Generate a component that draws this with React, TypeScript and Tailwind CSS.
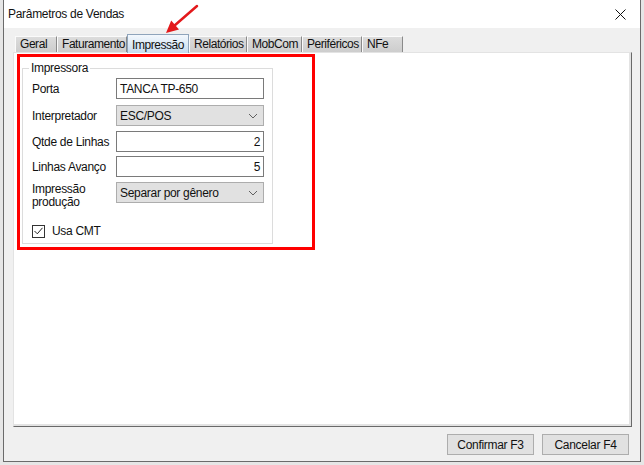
import React from "react";

const tabs = [
  { label: "Geral", w: "w-[42px]" },
  { label: "Faturamento", w: "w-[70px]" },
  { label: "Impressão", w: "w-[62px]", active: true },
  { label: "Relatórios", w: "w-[58px]" },
  { label: "MobCom", w: "w-[55px]" },
  { label: "Periféricos", w: "w-[60px]" },
  { label: "NFe", w: "w-[41px]" },
];

const Chevron = () => (
  <svg width="10" height="6" viewBox="0 0 10 6" className="shrink-0">
    <path d="M1 1 L5 5 L9 1" fill="none" stroke="#606060" strokeWidth="1" />
  </svg>
);

const TextBox = ({ value, right }: { value: string; right?: boolean }) => (
  <div
    className={`w-[148px] h-[21px] border border-[#7a7a7a] bg-white flex items-center px-[3px] ${
      right ? "justify-end" : ""
    }`}
  >
    {value}
  </div>
);

const Combo = ({ value }: { value: string }) => (
  <div className="w-[148px] h-[21px] border border-[#adadad] bg-[#e1e1e1] flex items-center justify-between pl-[3px] pr-[5px]">
    <span>{value}</span>
    <Chevron />
  </div>
);

export default function App() {
  return (
    <div className="relative w-[644px] h-[465px] bg-[#e6e6e6] text-[12px] tracking-[-0.3px] text-[#111] font-['Liberation_Sans',Arial,sans-serif]">
      {/* window */}
      <div className="ml-[3px] w-[638px] h-[462px] border-x border-b border-[#6b6b6b] bg-[#f0f0f0] flex flex-col">
        {/* title bar */}
        <div className="h-[28px] bg-white flex items-center justify-between pl-[4px] pr-[14px] shrink-0">
          <span>Parâmetros de Vendas</span>
          <svg width="11" height="11" viewBox="0 0 11 11">
            <path d="M0.5 0.5 L10.5 10.5 M10.5 0.5 L0.5 10.5" stroke="#111" strokeWidth="1" />
          </svg>
        </div>

        {/* tabs */}
        <div className="mt-[5px] ml-[11px] h-[19px] flex items-end shrink-0 tracking-[-0.45px]">
          {tabs.map((t) =>
            t.active ? (
              <div
                key={t.label}
                className={`${t.w} h-[19px] relative z-10 -mb-px border-t border-l border-r border-[#8fa4bb] bg-gradient-to-b from-[#f3f8fd] to-[#c7dcef] pl-[4px] pt-[3px] leading-[14px] whitespace-nowrap overflow-hidden`}
              >
                {t.label}
              </div>
            ) : (
              <div
                key={t.label}
                className={`${t.w} h-[16px] border-t border-l border-[#fafafa] border-r border-r-[#8a8a8a] bg-gradient-to-b from-[#dcdcdc] to-[#cdcdcd] pl-[4px] leading-[15px] whitespace-nowrap overflow-hidden`}
              >
                {t.label}
              </div>
            )
          )}
        </div>

        {/* tab panel */}
        <div className="ml-[9px] mr-[8px] h-[375px] border-l border-t border-[#e3e3e3] border-r border-b border-r-[#696969] border-b-[#696969] shrink-0">
          <div className="h-full border-r-2 border-b-2 border-[#e3e3e3] bg-white pl-[3px] pt-[1px]">
            {/* highlight box */}
            <div className="w-[298px] h-[196px] border-[3px] border-[#ff0000] pl-[2px] pt-[4px]">
              <fieldset className="w-[251px] h-[183px] border border-[#dcdcdc]">
                <legend className="ml-[6px] px-[2px] leading-[14px]">Impressora</legend>
                <div className="pl-[9px] pt-[3px] flex flex-col">
                  <div className="flex items-center h-[21px]">
                    <span className="w-[84px]">Porta</span>
                    <TextBox value="TANCA TP-650" />
                  </div>
                  <div className="flex items-center h-[21px] mt-[6px]">
                    <span className="w-[84px]">Interpretador</span>
                    <Combo value="ESC/POS" />
                  </div>
                  <div className="flex items-center h-[21px] mt-[5px]">
                    <span className="w-[84px]">Qtde de Linhas</span>
                    <TextBox value="2" right />
                  </div>
                  <div className="flex items-center h-[21px] mt-[4px]">
                    <span className="w-[84px]">Linhas Avanço</span>
                    <TextBox value="5" right />
                  </div>
                  <div className="flex items-start h-[21px] mt-[5px]">
                    <span className="w-[84px] leading-[13px] pt-[1px]">
                      Impressão
                      <br />
                      produção
                    </span>
                    <Combo value="Separar por gênero" />
                  </div>
                  <div className="flex items-center mt-[19px] gap-[7px]">
                    <div className="w-[13px] h-[13px] border border-[#333] bg-white flex items-center justify-center">
                      <svg width="9" height="8" viewBox="0 0 9 8">
                        <path d="M0.5 4 L3.3 6.8 L8.5 0.8" fill="none" stroke="#222" strokeWidth="1" />
                      </svg>
                    </div>
                    <span>Usa CMT</span>
                  </div>
                </div>
              </fieldset>
            </div>
          </div>
        </div>

        {/* buttons */}
        <div className="mt-[7px] mr-[11px] flex justify-end gap-[8px]">
          <button className="w-[87px] h-[21px] border border-[#adadad] bg-[#e1e1e1]">Confirmar F3</button>
          <button className="w-[87px] h-[21px] border border-[#adadad] bg-[#e1e1e1]">Cancelar F4</button>
        </div>
      </div>

      {/* red annotation arrow */}
      <svg className="absolute left-0 top-0 pointer-events-none" width="644" height="465">
        <line x1="197" y1="6" x2="174" y2="26" stroke="#e3191b" strokeWidth="2.5" strokeLinecap="round" />
        <polygon points="166,33 179,29.6 171.2,20.6" fill="#e3191b" />
      </svg>
    </div>
  );
}
